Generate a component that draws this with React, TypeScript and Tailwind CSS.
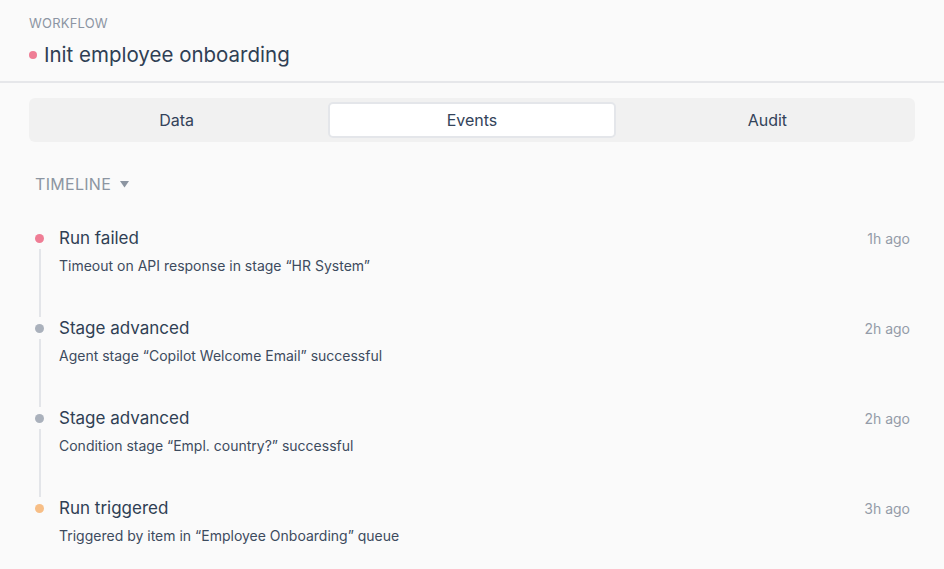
const events = [
  { title: "Run failed", detail: "Timeout on API response in stage “HR System”", time: "1h ago", dot: "bg-[#ef7d95]" },
  { title: "Stage advanced", detail: "Agent stage “Copilot Welcome Email” successful", time: "2h ago", dot: "bg-[#aab1bc]" },
  { title: "Stage advanced", detail: "Condition stage “Empl. country?” successful", time: "2h ago", dot: "bg-[#aab1bc]" },
  { title: "Run triggered", detail: "Triggered by item in “Employee Onboarding” queue", time: "3h ago", dot: "bg-[#f7be86]" },
];

const tabs = ["Data", "Events", "Audit"];

export default function App() {
  return (
    <div className="min-h-[569px] w-[944px] bg-[#fafafa] text-[#33435a]" style={{ fontFamily: "Inter, 'Noto Sans', sans-serif" }}>
      <div className="border-b-2 border-[#e6e7ea] px-[29px] pt-[14px] pb-[11px]">
        <div className="text-[13px] leading-[18px] tracking-[0.2px] text-[#8c95a3]">WORKFLOW</div>
        <div className="mt-[8px] flex items-center gap-[7px]">
          <span className="h-[8px] w-[8px] rounded-full bg-[#ef7d95]" />
          <span className="text-[20.5px] leading-[30px] text-[#2f3f54]">Init employee onboarding</span>
        </div>
      </div>

      <div className="px-[29px] pt-[15px]">
        <div className="grid grid-cols-3 rounded-[6px] bg-[#f1f1f1] py-[4px]">
          {tabs.map((t) => (
            <div
              key={t}
              className={
                t === "Events"
                  ? "mx-[4px] flex h-[36px] items-center justify-center rounded-[5px] border-2 border-[#e4e6ea] bg-white text-[16px] text-[#33435a]"
                  : "flex h-[36px] items-center justify-center text-[16px] text-[#33435a]"
              }
            >
              {t}
            </div>
          ))}
        </div>
      </div>

      <div className="pl-[35px] pr-[34px] pt-[31px]">
        <div className="flex items-center gap-[9px] text-[16px] leading-[22px] tracking-[0.3px] text-[#8c95a1]">
          TIMELINE
          <svg width="9" height="7" viewBox="0 0 9 7">
            <path d="M0 0h9L4.5 6.5z" fill="#8c95a1" />
          </svg>
        </div>

        <div className="mt-[32px]">
          {events.map((e, i) => (
            <div key={i} className="flex h-[90px] gap-[15px]">
              <div className="flex w-[9px] flex-col items-center pt-[7px]">
                <span className={`h-[9px] w-[9px] rounded-full ${e.dot}`} />
                {i < events.length - 1 && <span className="mt-[6px] w-[2px] flex-1 bg-[#e3e5e9]" />}
              </div>
              <div className="flex-1">
                <div className="flex items-center justify-between">
                  <span className="text-[17px] leading-[22px] text-[#2f3f54]">{e.title}</span>
                  <span className="text-[14px] text-[#949ca8]">{e.time}</span>
                </div>
                <div className="mt-[7px] text-[14px] leading-[20px] text-[#3d4b5e]">{e.detail}</div>
              </div>
            </div>
          ))}
        </div>
      </div>
    </div>
  );
}
